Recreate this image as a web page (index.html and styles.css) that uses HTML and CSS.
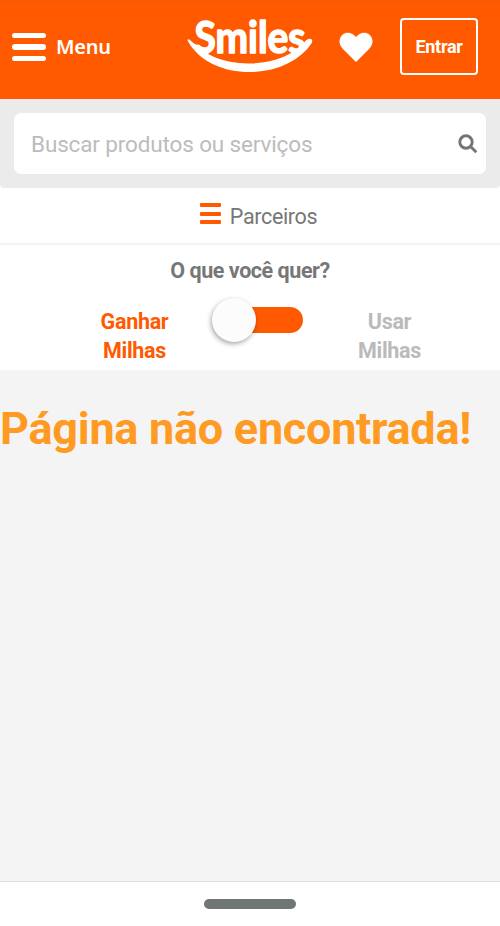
FILE: index.html
```html
<!DOCTYPE html>
<html lang="pt-BR">
<head>
<meta charset="utf-8">
<meta name="viewport" content="width=device-width">
<title>Smiles</title>
<link rel="stylesheet" href="styles.css">
</head>
<body>
<header class="header">
  <button class="menu">
    <span class="menu-bars"><i></i><i></i><i></i></span>
    <span class="menu-label">Menu</span>
  </button>
  <svg class="logo" viewBox="0 -13.500 128 73.500" role="img" aria-label="Smiles">
    <text class="logo-text" transform="translate(7.500 35.500) scale(.86 1)" textLength="129" lengthAdjust="spacingAndGlyphs">Smiles</text>
    <path d="M.8 23.500C0 21.500 1.500 21 3 22.500C20 39.500 38 45.500 61 46C86 46 106 38 118 24C121 20 126.500 20.500 125 25C113 44 88 54.500 63 54.500C37 54.500 13 45 .8 23.500Z"/>
    <path d="M3 24L7 31L20 37L24 34Q15 31 9 27Z"/>
  </svg>
  <svg class="heart" viewBox="0 0 34 31"><path d="M17 30L3.500 16.500C-.5 12.500 -.5 6 3.500 2.700C7.500-.5 13 .2 17 5C21 .2 26.500-.5 30.500 2.700C34.500 6 34.500 12.500 30.500 16.500Z"/></svg>
  <button class="login">Entrar</button>
</header>
<section class="search-area">
  <div class="search">
    <span class="search-text">Buscar produtos ou serviços</span>
    <svg class="search-icon" viewBox="0 0 20 20"><circle cx="8" cy="8" r="6.200"/><path d="M12.500 12.500L18.300 18.300"/></svg>
  </div>
</section>
<nav class="partners">
  <span class="partner-bars"><i></i><i></i><i></i></span>
  <span class="partner-label">Parceiros</span>
</nav>
<section class="choice">
  <h2 class="question">O que você quer?</h2>
  <div class="options">
    <span class="option active">Ganhar<br>Milhas</span>
    <span class="switch"><span class="knob"></span></span>
    <span class="option">Usar<br>Milhas</span>
  </div>
</section>
<main class="content"><h1 class="title">Página não encontrada!</h1></main>
<footer class="nav-bar"><span class="home-pill"></span></footer>
</body>
</html>
```
FILE: styles.css
```css
* { box-sizing: border-box; }
body {
  margin: 0;
  width: 500px;
  height: 926px;
  display: flex;
  flex-direction: column;
  overflow: hidden;
  background: #fff;
  font-family: Roboto, "Liberation Sans", sans-serif;
}
button { font: inherit; color: #fff; background: none; border: 0; padding: 0; }
h1, h2 { margin: 0; }
.header {
  height: 99px;
  flex: none;
  display: flex;
  align-items: flex-start;
  background: linear-gradient(#f45a06, #ff5a00 3px);
}
.menu { display: flex; align-items: center; margin: 32px 0 0 12px; height: 30px; width: 175px; }
.menu-bars { display: grid; gap: 6px; width: 34px; margin-right: 10px; }
.menu-bars i { height: 5.500px; border-radius: 3px; background: #fff; }
.menu-label { font: 600 20px/30px "Noto Sans", sans-serif; letter-spacing: -.3px; }
.logo { width: 128px; height: 73.500px; margin: 4px 0 0; fill: #fff; }
.logo-text {
  font: 700 44px Lato, sans-serif;
  stroke: #fff;
  stroke-width: 1.600px;
  stroke-linejoin: round;
}
.heart { width: 34px; height: 31px; margin: 31.500px 0 0 24px; fill: #fff; }
.login {
  width: 78px;
  height: 57px;
  margin: 18px 0 0 27px;
  border: 2.500px solid #fff;
  border-radius: 4px;
  font-size: 18px;
  font-weight: 700;
  letter-spacing: -.3px;
}
.search-area { height: 89px; flex: none; padding: 14px; background: #ebebeb; border-radius: 0 0 4px 4px; }
.search { height: 61px; display: flex; align-items: center; justify-content: space-between; padding: 0 8px 0 17px; background: #fff; border-radius: 7px; }
.search-text { font-size: 22.500px; letter-spacing: -.14px; color: #bcbcbc; }
.search-icon { width: 20px; height: 20px; fill: none; stroke: #747474; stroke-width: 2.900px; }
.partners { height: 57px; flex: none; display: flex; justify-content: center; align-items: center; gap: 9px; border-bottom: 2px solid #f4f4f4; padding-left: 17px; }
.partner-bars { display: grid; gap: 4.500px; width: 21px; margin-top: -4px; }
.partner-bars i { height: 4px; border-radius: 1px; background: #ff5a00; }
.partner-label { font-size: 21.500px; line-height: 28px; color: #777; margin-top: 2px; letter-spacing: -.35px; }
.choice { height: 125px; flex: none; }
.question { font-size: 21.500px; line-height: 26px; padding-top: 13px; text-align: center; color: #777; letter-spacing: -.45px; }
.options { display: flex; justify-content: center; padding: 23px 0 0 24px; }
.option { width: 100px; text-align: center; font-size: 21.500px; line-height: 29px; font-weight: 700; color: #bababa; letter-spacing: -.3px; }
.option.active { color: #ff5a00; }
.switch { width: 91px; height: 26px; margin: 0 37px 0 27px; border-radius: 13px; background: linear-gradient(90deg, transparent 26px, #ff5a00 26px); }
.knob { display: block; width: 44px; height: 44px; margin-top: -9px; border-radius: 50%; background: #fcfcfc; box-shadow: -1px 2px 5px rgba(0,0,0,.35); }
.content { flex: 1; background: #f4f4f4; padding-top: 33px; }
.title { font-size: 45px; line-height: 52px; letter-spacing: -.27px; color: #ff9a23; white-space: nowrap; }
.nav-bar { height: 45px; flex: none; border-top: 1px solid #dedede; display: flex; justify-content: center; padding-top: 17px; background: #fff; }
.home-pill { width: 92px; height: 10px; border-radius: 5px; background: #707673; }
```
